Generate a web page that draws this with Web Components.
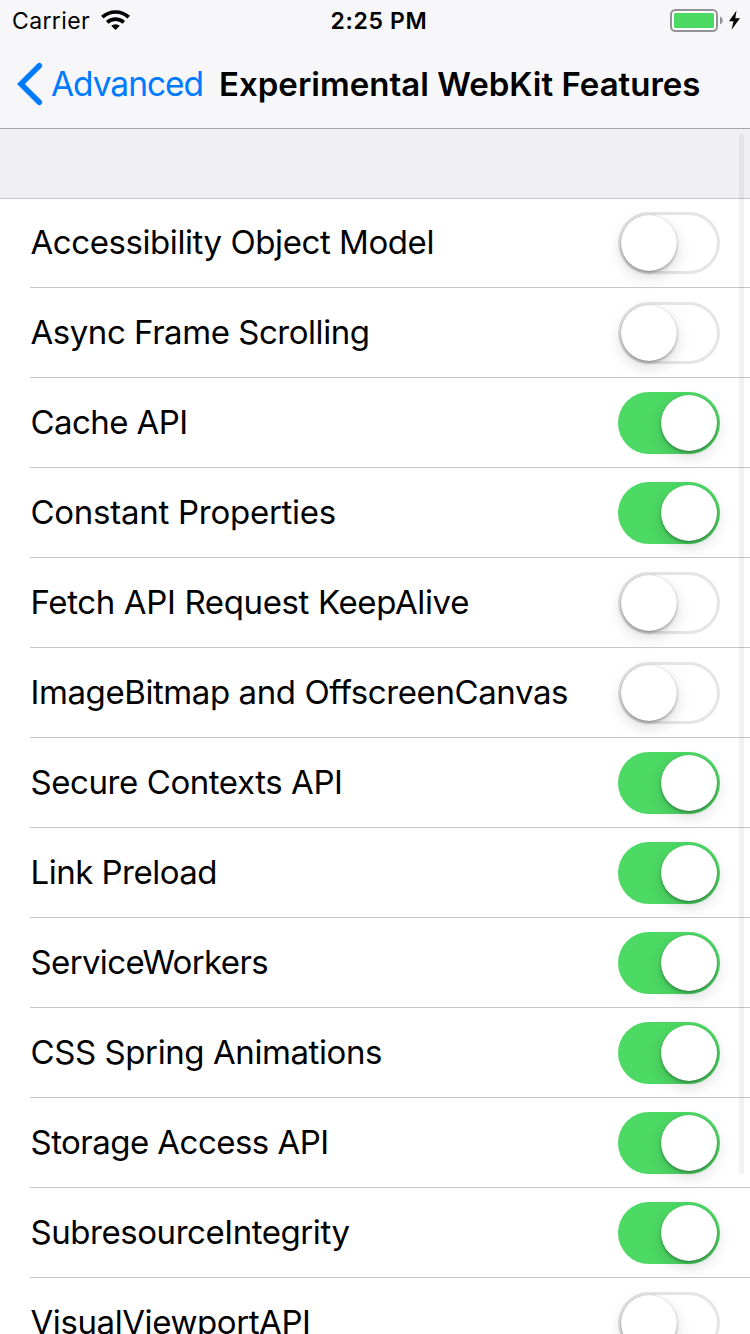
<!DOCTYPE html>
<html lang="en">
<head>
<meta charset="utf-8">
<title>Experimental WebKit Features</title>
<style>
html, body { margin: 0; height: 100%; overflow: hidden; background: #fff; }
body { font-family: Inter, "Liberation Sans", sans-serif; color: #000; }
</style>
</head>
<body>
<settings-screen></settings-screen>
<script>
const define = (name, html, setup) => customElements.define(name, class extends HTMLElement {
  connectedCallback() {
    if (this.shadowRoot) return;
    const t = document.createElement('template');
    t.innerHTML = html;
    this.attachShadow({ mode: 'open' }).append(t.content.cloneNode(true));
    if (setup) setup(this, this.shadowRoot);
  }
});

/* One line of text, tracked evenly to span the given advance width. */
define('tracked-text', `
<style>:host { display: block; white-space: nowrap; } span { display: inline-block; }</style><span></span>`,
(host, root) => {
  const s = root.querySelector('span');
  s.textContent = host.getAttribute('text');
  const w = s.getBoundingClientRect().width;
  s.style.letterSpacing = ((+host.getAttribute('span') - w) / s.textContent.length).toFixed(3) + 'px';
});

define('status-bar', `
<style>
:host { display: grid; grid-template-columns: 1fr auto 1fr; align-items: center; height: 40px; padding: 0 9px 0 12px; font-size: 23px; line-height: 38px; }
tracked-text { padding-top: 2px; }
.left { display: flex; align-items: center; gap: 11px; }
.time { font-weight: 600; padding-left: 5px; }
.right { display: flex; justify-content: flex-end; align-items: center; }
svg { display: block; }
</style>
<div class="left"><tracked-text text="Carrier" span="78"></tracked-text>
<svg width="30" height="22" viewBox="0 0 30 22"><g fill="none" stroke="#000" stroke-width="3.7"><path d="M1.3 8.2a19.3 19.3 0 0 1 26.4 0"/><path d="M6.2 13.3a12.3 12.3 0 0 1 16.6 0"/></g><path d="M10.2 16.8a6.6 6.6 0 0 1 8.6 0L14.5 21Z"/></svg></div>
<tracked-text class="time" text="2:25 PM" span="97"></tracked-text>
<div class="right"><svg width="72" height="26" viewBox="669 7 72 26"><rect x="671" y="10" width="46" height="21" rx="4.5" fill="#fff" stroke="#939296" stroke-width="2"/><rect x="674" y="13" width="40" height="15" rx="1.5" fill="#4cd964"/><path d="M720 16.5q2.8 1.2 2.8 4t-2.8 4Z" fill="#939296"/><path d="M736.5 10.5 729 21.3h4.5l-2 8.5 8.5-11.5h-4.7Z"/></svg></div>`);

define('nav-bar', `
<style>
:host { display: flex; align-items: center; height: 88px; padding-left: 17px; font-size: 33.5px; line-height: 87px; }
tracked-text { padding-top: 1px; }
svg { display: block; margin-right: 7px; }
.back { color: #007aff; width: 168px; }
.title { font-weight: 600; font-size: 33px; }
</style>
<svg width="27" height="44" viewBox="0 0 27 44"><path d="M22.3 3.7 3.9 22l18.4 18.3" fill="none" stroke="#007aff" stroke-width="5.6" stroke-linecap="round"/></svg>
<tracked-text class="back" text="Advanced" span="152"></tracked-text>
<tracked-text class="title" text="Experimental WebKit Features" span="481.5"></tracked-text>`);

define('toggle-switch', `
<style>
:host { display: flex; box-sizing: border-box; width: 102px; height: 62px; padding: 3px; border-radius: 31px; box-shadow: inset 0 0 0 3px #e5e5e5; }
i { width: 56px; height: 56px; border-radius: 50%; background: #fff; box-shadow: 0 0 1px rgba(0,0,0,.25), 0 2px 3px rgba(0,0,0,.27), 0 6px 16px rgba(0,0,0,.15); }
:host([on]) { justify-content: flex-end; background: #4cd964; box-shadow: none; }
</style><i></i>`);

define('setting-row', `
<style>
:host { display: flex; box-sizing: border-box; height: 90px; margin-left: 30px; padding-right: 30px; align-items: center; justify-content: space-between; font-size: 33px; line-height: 40px; box-shadow: inset 0 -1px #c8c7cc; }
tracked-text { padding: 0 0 2px .5px; }
</style><tracked-text></tracked-text><toggle-switch></toggle-switch>`,
(host, root) => {
  const t = root.querySelector('tracked-text');
  const n = document.createElement('tracked-text');
  n.setAttribute('text', host.getAttribute('label'));
  n.setAttribute('span', host.getAttribute('span'));
  t.replaceWith(n);
  root.querySelector('toggle-switch').toggleAttribute('on', host.hasAttribute('on'));
});

define('settings-screen', `
<style>
:host { display: block; position: relative; height: 1334px; overflow: hidden; background: #fff; }
header { background: #f7f7f9; border-bottom: 1px solid #a7a7b4; }
.group { height: 69px; background: #efeff4; }
.list { box-shadow: inset 0 1px #c8c7cc; }
.scroll { position: absolute; left: 739px; top: 134px; width: 5px; height: 1040px; border-radius: 2.5px; background: rgba(0,0,0,.05); }
</style>
<header><status-bar></status-bar><nav-bar></nav-bar></header>
<div class="group"></div>
<div class="list">
<setting-row label="Accessibility Object Model" span="403.5"></setting-row>
<setting-row label="Async Frame Scrolling" span="339"></setting-row>
<setting-row label="Cache API" span="157" on></setting-row>
<setting-row label="Constant Properties" span="305.5" on></setting-row>
<setting-row label="Fetch API Request KeepAlive" span="438.5"></setting-row>
<setting-row label="ImageBitmap and OffscreenCanvas" span="537.5"></setting-row>
<setting-row label="Secure Contexts API" span="312" on></setting-row>
<setting-row label="Link Preload" span="186.5" on></setting-row>
<setting-row label="ServiceWorkers" span="237.5" on></setting-row>
<setting-row label="CSS Spring Animations" span="351.5" on></setting-row>
<setting-row label="Storage Access API" span="298" on></setting-row>
<setting-row label="SubresourceIntegrity" span="319" on></setting-row>
<setting-row label="VisualViewportAPI" span="280"></setting-row>
</div>
<div class="scroll"></div>`);
</script>
</body>
</html>
